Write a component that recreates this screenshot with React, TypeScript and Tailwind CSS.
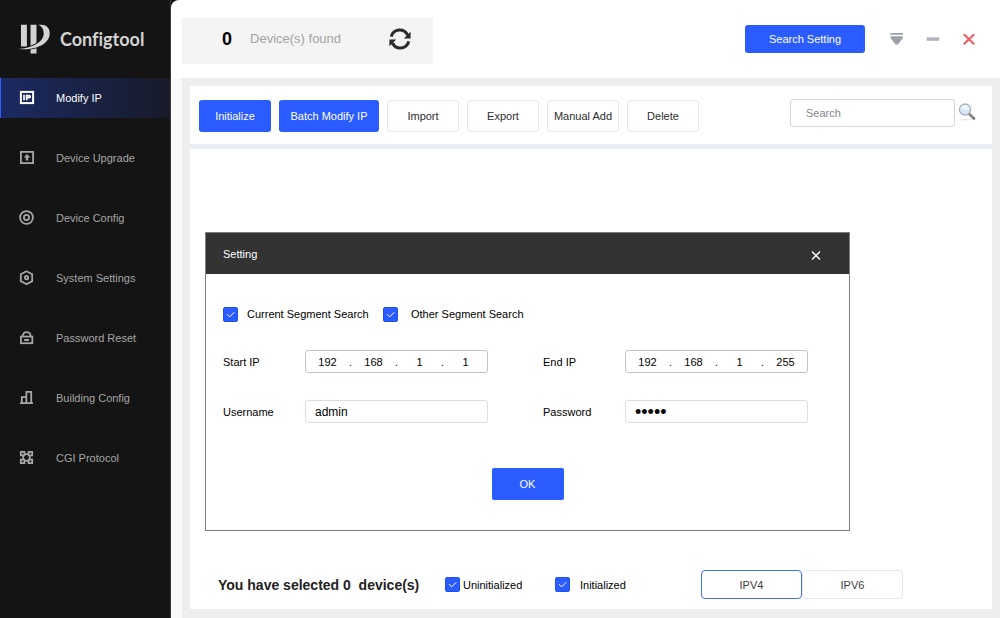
import React, { useState } from "react";

const stroke = { fill: "none", stroke: "currentColor", strokeWidth: 1.8 };

function ModifyIcon() {
  return (
    <svg viewBox="0 0 16 16" className="size-4" aria-hidden="true">
      <rect x="1.9" y="1.9" width="12.2" height="11.2" {...stroke} strokeWidth="2" />
      <path d="M5 4.800v5.400M7.600 4.800v5.400M7.600 5.600h2.700q.9 0 .9 1t-.9 1H7.600" {...stroke} strokeWidth="1.700" />
    </svg>
  );
}

function UpgradeIcon() {
  return (
    <svg viewBox="0 0 16 16" className="size-4" aria-hidden="true">
      <rect x="1.900" y="1.900" width="12.200" height="11.200" {...stroke} />
      <path d="M8 3.900 11.400 7.400H9.200v3.200H6.800V7.400H4.600z" fill="currentColor" />
    </svg>
  );
}

function ConfigIcon() {
  return (
    <svg viewBox="0 0 16 16" className="size-4" aria-hidden="true">
      <circle cx="7.500" cy="7.500" r="6.400" {...stroke} />
      <circle cx="7.500" cy="7.500" r="2.600" {...stroke} />
    </svg>
  );
}

function SystemIcon() {
  return (
    <svg viewBox="0 0 16 16" className="size-4" aria-hidden="true">
      <path d="M7.500 1.200 13.200 4.300v6.800L7.500 14.300 1.800 11.100V4.300z" {...stroke} />
      <circle cx="7.500" cy="7.700" r="1.700" {...stroke} />
    </svg>
  );
}

function LockIcon() {
  return (
    <svg viewBox="0 0 16 16" className="size-4" aria-hidden="true">
      <rect x="1.900" y="6.600" width="11.400" height="6.600" {...stroke} />
      <path d="M3.600 6.400C3.600.6 11.600.6 11.600 6.400M5.200 10h4.800" {...stroke} />
    </svg>
  );
}

function BuildingIcon() {
  return (
    <svg viewBox="0 0 16 16" className="size-4" aria-hidden="true">
      <path d="M1 13.200h13M2.800 13V7.200h4.400M7.400 13V1.900h4.800v11.300" {...stroke} />
    </svg>
  );
}

function ProtocolIcon() {
  return (
    <svg viewBox="0 0 16 16" className="size-4" aria-hidden="true">
      <path
        d="M1.800 1.800h3.600v3.600H1.800zM9.600 1.800h3.600v3.600H9.600zM1.800 9.600h3.600v3.600H1.800zM9.600 9.600h3.600v3.600H9.600zM5.400 4.200h4.200M5.400 10.800h4.200M4.200 5.400v4.200M10.800 5.400v4.200"
        {...stroke}
      />
    </svg>
  );
}

const navItems = [
  { label: "Modify IP", Icon: ModifyIcon },
  { label: "Device Upgrade", Icon: UpgradeIcon },
  { label: "Device Config", Icon: ConfigIcon },
  { label: "System Settings", Icon: SystemIcon },
  { label: "Password Reset", Icon: LockIcon },
  { label: "Building Config", Icon: BuildingIcon },
  { label: "CGI Protocol", Icon: ProtocolIcon },
];

function Sidebar() {
  return (
    <aside className="flex w-[171px] shrink-0 flex-col border-r border-[#3a3a3a] bg-[#141414]">
      <div className="flex h-[78px] items-center gap-[9px] pl-[18px]">
        <svg viewBox="24 22 100 96" className="h-8 w-[33px] text-[#d2d2d2]" fill="currentColor" aria-hidden="true">
          <path d="M33 27h18v66H33zM62 27h18v87H62z" />
          <path
            d="M86 27h8c16 0 26 9 26 26 0 30-38 52-95 47 40-2 76-20 77-46 0-13-5-22-16-27z"
            stroke="#141414"
            strokeWidth="6"
            paintOrder="stroke"
          />
        </svg>
        <span className="font-['Lato',sans-serif] text-[18px] font-bold text-[#d2d2d2] [font-variant-ligatures:none]">
          Configtool
        </span>
      </div>
      <nav className="flex flex-col gap-5">
        {navItems.map(({ label, Icon }, i) => (
          <a
            key={label}
            href="#"
            className={
              i === 0
                ? "flex h-10 items-center gap-[21px] border-l border-[#2b5cff] bg-linear-to-r from-[#1b2a62] to-[#171a29] pl-[18px] text-white"
                : "flex h-10 items-center gap-[21px] pl-[19px] text-[#a6a6a6]"
            }
          >
            <Icon />
            {label}
          </a>
        ))}
      </nav>
    </aside>
  );
}

function Header() {
  return (
    <header className="flex h-[78px] items-center pl-[11px] pr-[23px]">
      <div className="mt-1 flex h-[46px] w-[251px] items-center bg-[#f4f4f4] pb-1 pl-10">
        <span className="text-lg font-bold text-black">0</span>
        <span className="ml-[18px] text-[13px] text-[#a3a3a3]">Device(s) found</span>
        <button type="button" aria-label="Refresh" className="ml-auto mr-[22px] text-[#2c2c2c]">
          <svg viewBox="0 0 22 22" className="size-[22px]" aria-hidden="true">
            <path d="M2.200 8.600C4.600.2 15-.2 18.600 7M19.800 13.400C17.400 21.800 7 22.200 3.400 15" fill="none" stroke="currentColor" strokeWidth="3" />
            <path d="M21.600 3.800v6.600h-6.800zM.4 18.200v-6.600h6.800z" fill="currentColor" />
          </svg>
        </button>
      </div>
      <button type="button" className="ml-auto h-7 w-[120px] rounded-[3px] bg-[#2b5cff] text-white">
        Search Setting
      </button>
      <div className="ml-6 flex gap-5">
        <button type="button" aria-label="Menu" className="text-[#9da1a9]">
          <svg viewBox="0 0 16 16" className="size-4" aria-hidden="true">
            <path d="M1.400 2h12.600v1.800H1.400zM1.600 5.200h12.200v1.800L9 13.600H6.400L1.600 7z" fill="currentColor" />
          </svg>
        </button>
        <button type="button" aria-label="Minimize" className="text-[#b0b4bd]">
          <svg viewBox="0 0 16 16" className="size-4" aria-hidden="true">
            <path d="M1.600 6.400h12.800v3.400H1.600z" fill="currentColor" />
          </svg>
        </button>
        <button type="button" aria-label="Close" className="text-[#ec5a5f]">
          <svg viewBox="0 0 16 16" className="size-4" aria-hidden="true">
            <path d="M2.800 3.200 13.200 13.200M13.200 3.200 2.800 13.200" fill="none" stroke="currentColor" strokeWidth="2" />
          </svg>
        </button>
      </div>
    </header>
  );
}

const plainButton = "h-8 w-[72px] rounded-[3px] border border-[#e6e6e8] bg-white text-[#2d2d2d]";

function Toolbar() {
  return (
    <div className="flex h-[63px] items-center justify-between border-b-[5px] border-[#eceef5] pl-[9px] pr-4">
      <div className="flex gap-2 pt-px">
        <button type="button" className="h-8 w-[72px] rounded-[3px] bg-[#2b5cff] text-white">Initialize</button>
        <button type="button" className="h-8 w-[100px] rounded-[3px] bg-[#2b5cff] text-white">Batch Modify IP</button>
        {["Import", "Export", "Manual Add", "Delete"].map((name) => (
          <button key={name} type="button" className={plainButton}>
            {name}
          </button>
        ))}
      </div>
      <div className="flex items-center gap-[3px] pb-1">
        <input
          type="search"
          aria-label="Search"
          placeholder="Search"
          className="h-7 w-[165px] rounded-[3px] border border-[#d3d5dc] px-[15px] outline-none placeholder:text-[#858585]"
        />
        <button type="button" aria-label="Find">
          <svg viewBox="0 0 18 20" className="h-5 w-[18px]" aria-hidden="true">
            <ellipse cx="8.500" cy="16.600" rx="6" ry=".8" fill="#e9e9e9" />
            <path d="M11.400 11 16 15.400" stroke="#777" strokeWidth="2.800" strokeLinecap="round" />
            <path d="M11.400 10.600 15.400 14.400" stroke="#b5b5b5" strokeWidth="1" />
            <circle cx="7" cy="6.600" r="5.600" fill="#d3e6f7" stroke="#a9b0b8" strokeWidth="1.300" />
            <path d="M2.600 6.400a4.400 4.400 0 0 1 8.800 0q-4.400 1.600-8.800 0" fill="#eaf4fd" />
          </svg>
        </button>
      </div>
    </div>
  );
}

function CheckBox({ id, label, className }: { id: string; label: string; className: string }) {
  return (
    <label htmlFor={id} className={className}>
      <span className="grid size-[15px] shrink-0">
        <input
          id={id}
          type="checkbox"
          defaultChecked
          className="peer col-start-1 row-start-1 size-[15px] appearance-none rounded-[2px] border border-[#1f50f5] bg-white checked:bg-[#2b5cff]"
        />
        <svg
          viewBox="0 0 15 15"
          className="pointer-events-none col-start-1 row-start-1 hidden size-[15px] text-white peer-checked:block"
          aria-hidden="true"
        >
          <path d="M4 7.200 6.700 9.800 11.200 5.300" fill="none" stroke="currentColor" strokeWidth="1" />
        </svg>
      </span>
      {label}
    </label>
  );
}

function IpField({ label, parts }: { label: string; parts: string[] }) {
  return (
    <div role="group" aria-label={label} className="flex items-center">
      <span className="w-[82px] shrink-0">{label}</span>
      <div className="flex h-[23px] min-w-0 flex-1 items-center rounded-[3px] border border-[#bfc3cc]">
        {parts.map((part, i) => (
          <React.Fragment key={i}>
            {i > 0 && <span className="w-[3px] shrink-0">.</span>}
            <input
              aria-label={`${label} ${i + 1}`}
              defaultValue={part}
              className="w-0 min-w-0 flex-1 text-center outline-none"
            />
          </React.Fragment>
        ))}
      </div>
    </div>
  );
}

function SettingDialog() {
  return (
    <section
      role="dialog"
      aria-labelledby="setting-title"
      className="w-full max-w-[645px] border border-[#7d7d7d] bg-white text-black"
    >
      <div className="flex h-[41px] items-center justify-between bg-[#333333] pl-[17px] pr-[27px] text-white">
        <h2 id="setting-title">Setting</h2>
        <button type="button" aria-label="Close dialog" className="pt-1">
          <svg viewBox="0 0 12 12" className="size-3" aria-hidden="true">
            <path d="M2 1.600 10 9.600M10 1.600 2 9.600" fill="none" stroke="currentColor" strokeWidth="1.400" />
          </svg>
        </button>
      </div>
      <form className="pb-[30px] pl-[17px] pr-[41px] pt-8" onSubmit={(e) => e.preventDefault()}>
        <div className="flex gap-3">
          <CheckBox id="current" label="Current Segment Search" className="flex w-[148px] items-center gap-[9px] whitespace-nowrap" />
          <CheckBox id="other" label="Other Segment Search" className="flex items-center gap-[13px]" />
        </div>
        <div className="mt-7 grid grid-cols-2 gap-x-[55px] gap-y-[27px]">
          <IpField label="Start IP" parts={["192", "168", "1", "1"]} />
          <IpField label="End IP" parts={["192", "168", "1", "255"]} />
          <div className="flex items-center">
            <label htmlFor="username" className="w-[82px] shrink-0">Username</label>
            <input
              id="username"
              defaultValue="admin"
              className="h-[23px] min-w-0 flex-1 rounded-[3px] border border-[#dcdee3] px-[9px] text-xs outline-none"
            />
          </div>
          <div className="flex items-center">
            <label htmlFor="password" className="w-[82px] shrink-0">Password</label>
            <input
              id="password"
              type="password"
              defaultValue="admin"
              className="h-[23px] min-w-0 flex-1 rounded-[3px] border border-[#dcdee3] px-[9px] text-lg outline-none"
            />
          </div>
        </div>
        <div className="mt-[45px] flex justify-center pl-6">
          <button type="submit" className="h-8 w-[72px] rounded-[2px] bg-[#2b5cff] text-white">OK</button>
        </div>
      </form>
    </section>
  );
}

function Footer() {
  const [version, setVersion] = useState("IPV4");
  return (
    <footer className="flex items-center pb-[10px] pl-7 pr-[89px] text-black">
      <p className="w-[227px] whitespace-pre text-sm leading-4 font-bold text-[#222]">{"You have selected 0  device(s)"}</p>
      <CheckBox id="uninitialized" label="Uninitialized" className="flex w-[110px] items-center gap-[3px]" />
      <CheckBox id="initialized" label="Initialized" className="flex items-center gap-[10px]" />
      <div className="ml-auto flex">
        {["IPV4", "IPV6"].map((v) => (
          <button
            key={v}
            type="button"
            aria-pressed={version === v}
            onClick={() => setVersion(v)}
            className={
              version === v
                ? "h-[29px] w-[101px] rounded-[4px] border border-[#4470f7] text-[#3c3c3c]"
                : "h-[29px] w-[101px] rounded-[4px] border border-[#e6e6e8] text-[#3c3c3c]"
            }
          >
            {v}
          </button>
        ))}
      </div>
    </footer>
  );
}

export default function App() {
  return (
    <div className="flex min-h-screen bg-[#141414] font-['Liberation_Sans',Arial,sans-serif] text-[11px] leading-4">
      <Sidebar />
      <div className="flex min-w-0 flex-1 flex-col rounded-tl-lg bg-white">
        <Header />
        <div className="flex flex-1 border-l-[11px] border-[#f9f9fc] bg-[#eeeeee] p-2 pb-[9px]">
          <main className="flex min-w-0 flex-1 flex-col bg-white">
            <Toolbar />
            <div className="flex-1 pl-[15px] pt-[83px]">
              <SettingDialog />
            </div>
            <Footer />
          </main>
        </div>
      </div>
    </div>
  );
}
